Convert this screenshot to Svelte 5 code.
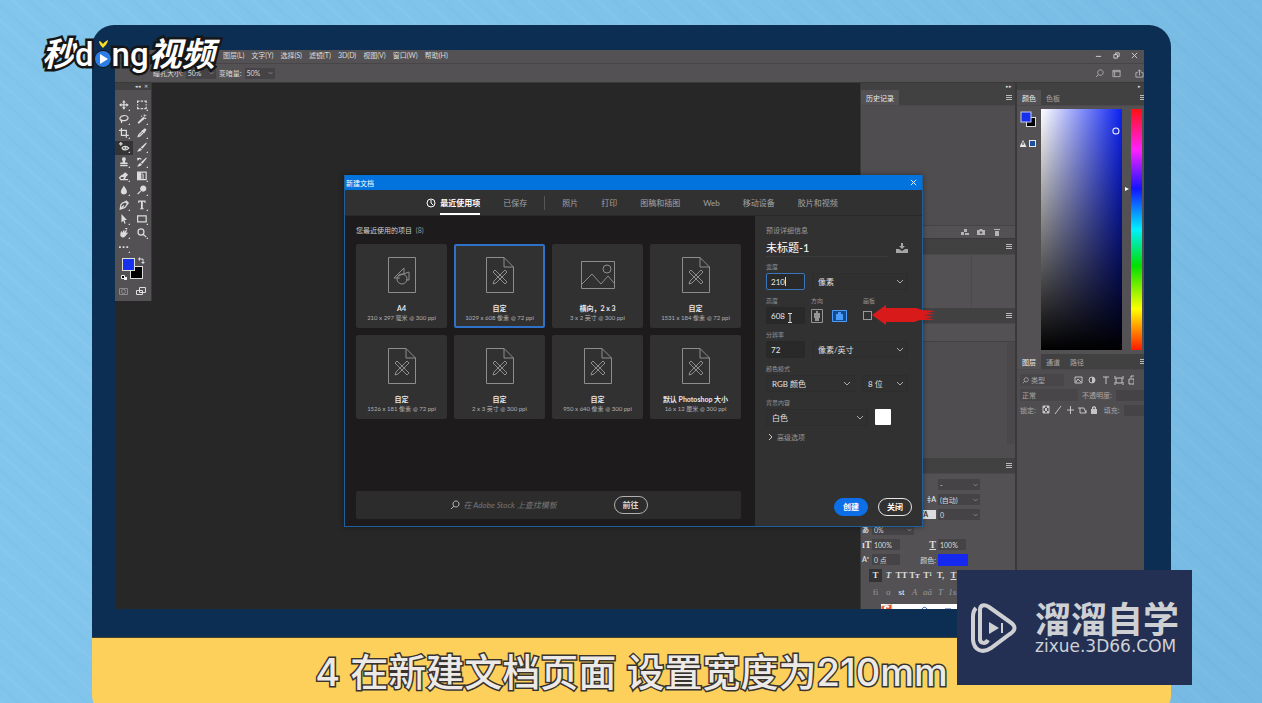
<script lang="ts">
  type Tool = { name: string; line?: string; fill?: string };

  const menus = ['图层(L)', '文字(Y)', '选择(S)', '滤镜(T)', '3D(D)', '视图(V)', '窗口(W)', '帮助(H)'];

  const tools: Tool[] = [
    { name: '移动', line: 'M8 2V14M2 8H14', fill: 'M8 0L11 4H5ZM8 16L5 12H11ZM0 8L4 5V11ZM16 8L12 11V5Z' },
    { name: '选框', line: 'M1 5V2H4M6 2H10M12 2H15V5M15 7V9M15 11V14H12M10 14H6M4 14H1V11M1 9V7' },
    { name: '套索', line: 'M4 11C0 9 1 3 8 2.500C15 2 17 8 12 10C9 11.500 6 11 4 10C3 12 5 12 4 15' },
    { name: '魔棒', line: 'M2 15L10 7M12 1V4M15 7H12M7 3L8 4M15 2L14 3', fill: 'M9 6L12 4L12 8L3 16L1 14Z' },
    { name: '裁剪', line: 'M4 0V12H16M0 4H12V16' },
    { name: '吸管', line: 'M2 14L3 11L9 5L11 7L5 13Z', fill: 'M8 4L10 3L12 1C14 0 16 2 15 4L13 6L12 9Z' },
    { name: '红眼', line: 'M3 0V6M0 3H6M5 10C7 6 13 6 16 10C13 14 7 14 5 10Z', fill: 'M9 8.500H12V11.500H9Z' },
    { name: '画笔', fill: 'M15 1L16 2L9 11L6 9ZM5 10L8 12C7 15 3 16 0 15C3 14 2 11 5 10Z' },
    { name: '图章', fill: 'M6 9C7 6 4 5 5 2C6 0 10 0 11 2C12 5 9 6 10 9H14V12H2V9ZM2 13H14V15H2Z' },
    { name: '历史画笔', line: 'M1 4C3 1 6 2 7 4', fill: 'M15 1L16 2L9 11L6 9ZM5 10L8 12C7 15 3 16 0 15C3 14 2 11 5 10ZM0 1L1 6L4 4Z' },
    { name: '橡皮擦', line: 'M1 11L5 7L10 11L7 14H3ZM7 14H15', fill: 'M5 7L10 2L15 6L10 11Z' },
    { name: '渐变', line: 'M1 2H15V14H1Z', fill: 'M1 2H7V14H1ZM8 3H9V13H8ZM10 5H11V13H10Z' },
    { name: '模糊', fill: 'M8 1C10 5 13 8 13 11C13 17 3 17 3 11C3 8 6 5 8 1Z' },
    { name: '减淡', line: 'M6 10L1 15', fill: 'M10 1C17 1 17 11 10 11C3 11 4 1 10 1Z' },
    { name: '钢笔', line: 'M2 15L3 8C6 3 9 5 12 2L15 5C11 8 13 11 8 13ZM2 15L8 9M10 2L15 7' },
    { name: '文字', fill: 'M2 1H14V5H12.500L12 3H9.500V13.500L11 14V15H5V14L6.500 13.500V3H4L3.500 5H2Z' },
    { name: '路径选择', fill: 'M4 0L13 10H9L11 15L9 16L7 11L4 14Z' },
    { name: '矩形', line: 'M1 3H15V13H1Z' },
    { name: '旋转视图', fill: 'M3 6L5 5L5 8L8 3L9 4L8 7L12 3L13 4L11 8L14 7L14 9L10 14C7 17 2 15 2 11ZM9 0L14 0L13 3Z' },
    { name: '缩放', line: 'M10.500 10.500L15 15M6.500 1.500C13 1.500 13 11.500 6.500 11.500C0 11.500 0 1.500 6.500 1.500Z' },
    { name: '编辑工具栏', fill: 'M0 7H3V10H0ZM6 7H9V10H6ZM12 7H15V10H12Z' },
  ];

  const categories = ['照片', '打印', '图稿和插图', 'Web', '移动设备', '胶片和视频'];

  const presets = [
    { icon: 'print', name: 'A4', size: '210 x 297 毫米 @ 300 ppi' },
    { icon: 'custom', name: '自定', size: '1029 x 608 像素 @ 72 ppi' },
    { icon: 'photo', name: '横向，2 x 3', size: '3 x 2 英寸 @ 300 ppi' },
    { icon: 'custom', name: '自定', size: '1531 x 184 像素 @ 72 ppi' },
    { icon: 'custom', name: '自定', size: '1526 x 181 像素 @ 72 ppi' },
    { icon: 'custom', name: '自定', size: '2 x 3 英寸 @ 300 ppi' },
    { icon: 'custom', name: '自定', size: '950 x 640 像素 @ 300 ppi' },
    { icon: 'custom', name: '默认 Photoshop 大小', size: '16 x 12 厘米 @ 300 ppi' },
  ];

  const typeStyles = ['T', 'T', 'TT', 'Tт', 'T¹', 'T,', 'T', 'T'];
  const openType = ['fi', 'σ', 'st', 'A', 'aā', 'T', '1st', '½'];

  let selected = $state(1);
  let width = $state('210');
  let height = $state('608');
  let resolution = $state('72');
  let landscape = $state(true);
  let artboard = $state(false);
</script>

{#snippet chevron()}
  <svg class="chevron" viewBox="0 0 8 5" aria-hidden="true"><path d="M1 1L4 4L7 1" /></svg>
{/snippet}

{#snippet panelMenu()}
  <svg class="panel-menu" viewBox="0 0 6 5" aria-hidden="true"><path d="M0 .5H6M0 2.500H6M0 4.500H6" /></svg>
{/snippet}

{#snippet picker(label: string, value: string)}
  <span class="picker">
    <select aria-label={label}><option>{value}</option></select>
    {@render chevron()}
  </span>
{/snippet}

<main class="scene">
  <section class="frame">
    <div class="app">
      <nav class="menubar">
        {#each menus as menu (menu)}
          <button>{menu}</button>
        {/each}
        <span class="window-buttons">
          <svg viewBox="0 0 8 8" aria-hidden="true"><path d="M1 5H7" /></svg>
          <svg viewBox="0 0 8 8" aria-hidden="true"><path d="M3 3V1H7V5H5M1 3H5V7H1Z" /></svg>
          <svg viewBox="0 0 8 8" aria-hidden="true"><path d="M1 1L7 7M7 1L1 7" /></svg>
        </span>
      </nav>

      <div class="options">
        <label for="pupil">瞳孔大小:</label>
        <span class="mini mini--option"><input id="pupil" value="50%" />{@render chevron()}</span>
        <label for="darken">变暗量:</label>
        <span class="mini mini--option"><input id="darken" value="50%" />{@render chevron()}</span>
        <span class="option-icons">
          <svg viewBox="0 0 10 10" aria-hidden="true"><path d="M4 6L1 9M6 1C10 1 10 7 6 7C2 7 2 1 6 1Z" /></svg>
          <svg viewBox="0 0 10 10" aria-hidden="true"><path d="M1 1.500H9V8.500H1ZM1 3H9M3 3V8" /></svg>
          <svg viewBox="0 0 10 10" aria-hidden="true"><path d="M3 4H1V9H9V4H7M5 7V1M3 3L5 1L7 3" /></svg>
        </span>
      </div>

      <div class="workspace">
        <aside class="tools">
          <div class="tools__head">◂◂ &nbsp;✕</div>
          <div class="tools__grid">
            {#each tools as tool (tool.name)}
              <button class="tool" class:tool--active={tool.name === '红眼'} aria-label={tool.name}>
                <svg viewBox="0 0 18 18" aria-hidden="true">
                  {#if tool.line}<path class="line" d={tool.line} />{/if}
                  {#if tool.fill}<path class="solid" d={tool.fill} />{/if}
                  <path class="solid" d="M18 15V18H15Z" />
                </svg>
              </button>
            {/each}
          </div>
          <svg class="tools__colors" viewBox="0 0 36 44" aria-hidden="true">
            <rect x="15.500" y="10.500" width="12" height="12" fill="#000" stroke="#ddd" />
            <rect x="7.500" y="2.500" width="12" height="12" fill="#1730ee" stroke="#ddd" />
            <path d="M25 3H28V6" fill="none" stroke="#ddd" />
            <path d="M23 3L25 1V5ZM28 8L26 6H30Z" fill="#ddd" />
            <path d="M6.500 19.500H9.500V22.500H6.500Z" fill="#000" stroke="#eee" />
            <path d="M9 21H12V24H9Z" fill="#eee" />
            <path d="M4.500 32.500H12.500V38.500H4.500Z" fill="none" stroke="#8c8a8c" />
            <circle cx="8.500" cy="35.500" r="2" fill="none" stroke="#8c8a8c" />
            <path d="M24.500 31.500H30.500V36.500H24.500ZM21.500 34.500H27.500V38.500H21.500Z" fill="#535153" stroke="#ddd" />
          </svg>
        </aside>

        <div class="canvas"></div>

        <div class="column column--wide">
          <div class="strip">▸▸</div>
          <div class="tabs"><button class="tab tab--active">历史记录</button>{@render panelMenu()}</div>
          <div class="history"></div>
          <div class="history-foot">
            <svg viewBox="0 0 8 8" aria-hidden="true"><path d="M0 4H3V7H0ZM3 1H6V4H3ZM4 5H8V7H4Z" /></svg>
            <svg viewBox="0 0 8 8" aria-hidden="true"><path fill-rule="evenodd" d="M0 2H2L3 1H5L6 2H8V7H0ZM4 3L2.500 4.500L4 6L5.500 4.500Z" /></svg>
            <svg viewBox="0 0 8 8" aria-hidden="true"><path d="M1 1H7V2H1ZM2 3H6V8H2Z" /></svg>
          </div>
          <div class="tabs">{@render panelMenu()}</div>
          <div class="adjust"></div>
          <div class="tabs">{@render panelMenu()}</div>
          <div class="library-head"></div>
          <div class="library"><span></span></div>
          <div class="tabs">{@render panelMenu()}</div>
          <div class="character">
            <div class="pair">
              <span></span>
              <span></span>
              <span></span>
              <span class="mini mini--wide"><input aria-label="字体样式" value="-" />{@render chevron()}</span>
            </div>
            <div class="pair">
              <span></span>
              <span></span>
              <b>‡A</b>
              <span class="mini mini--wide"><input aria-label="行距" value="(自动)" />{@render chevron()}</span>
            </div>
            <div class="pair">
              <span></span>
              <span></span>
              <b class="boxed">VA</b>
              <span class="mini mini--wide"><input aria-label="字距" value="0" />{@render chevron()}</span>
            </div>
            <div class="pair">
              <b>あ</b>
              <span class="mini mini--wide"><input aria-label="比例间距" value="0%" />{@render chevron()}</span>
            </div>
            <div class="pair">
              <b class="big">ıT</b>
              <span class="mini"><input aria-label="垂直缩放" value="100%" /></span>
              <b class="big under">T</b>
              <span class="mini"><input aria-label="水平缩放" value="100%" /></span>
            </div>
            <div class="pair">
              <b>Aª</b>
              <span class="mini"><input aria-label="基线偏移" value="0 点" /></span>
              <span class="right">颜色:</span>
              <span class="ink"></span>
            </div>
            <div class="glyphs">
              {#each typeStyles as glyph, i (i)}
                <button class:pressed={i === 0} class:slanted={i === 1} class:under={i === 6}>{glyph}</button>
              {/each}
            </div>
            <div class="glyphs glyphs--dim">
              {#each openType as glyph, i (i)}
                <button class:lit={i === 2} class:slanted={i > 2}>{glyph}</button>
              {/each}
            </div>
            <div class="ime">
              <svg viewBox="0 0 80 10" aria-hidden="true">
                <path d="M0 2L11 0V10H0Z" fill="#e85a2c" />
                <path d="M8 3C4 1 2 5 6 6C9 7 8 9 4 9" stroke="#fff" stroke-width="2" />
                <path d="M18 5V10M40 10C40 1 47 1 47 10M54 6V10M64 5H70" stroke="#2b4fa8" />
              </svg>
            </div>
          </div>
        </div>

        <div class="column column--narrow">
          <div class="strip">▸</div>
          <div class="tabs">
            <button class="tab tab--active">颜色</button>
            <button class="tab">色板</button>
            {@render panelMenu()}
          </div>
          <div class="color">
            <svg class="color__chips" viewBox="0 0 18 40" aria-hidden="true">
              <rect x="6.500" y="8.500" width="9" height="9" fill="#000" stroke="#ddd" />
              <rect x="1" y="3" width="10" height="10" fill="#1730ee" stroke="#c4cbee" />
              <path d="M3 31L6.500 38H-.5Z" fill="#e8e8e8" />
              <path d="M3 33V36" stroke="#333" />
              <rect x="9.500" y="31.500" width="6" height="6" fill="#1d4fa0" stroke="#e8e8e8" />
            </svg>
            <svg class="color__field" viewBox="0 0 80 241" preserveAspectRatio="none" aria-hidden="true">
              <defs>
                <linearGradient id="sat"><stop stop-color="#fff" /><stop offset="1" stop-color="#0b21f2" /></linearGradient>
                <linearGradient id="val" x2="0" y2="1"><stop stop-opacity="0" /><stop offset="1" /></linearGradient>
              </defs>
              <rect width="80" height="241" fill="url(#sat)" />
              <rect width="80" height="241" fill="url(#val)" />
              <circle cx="74" cy="22" r="3" fill="none" stroke="#fff" />
            </svg>
            <svg class="color__mark" viewBox="0 0 4 241" aria-hidden="true"><path d="M0 78L4 80L0 82Z" fill="#fff" /></svg>
            <span class="color__hue"></span>
          </div>
          <div class="tabs tabs--layers">
            <button class="tab tab--active">图层</button>
            <button class="tab">通道</button>
            <button class="tab">路径</button>
            {@render panelMenu()}
          </div>
          <div class="layers">
            <div class="layers__row">
              <span class="well">
                <svg class="find" viewBox="0 0 10 10" aria-hidden="true"><path d="M4 6L1 9M6 1C10 1 10 7 6 7C2 7 2 1 6 1Z" /></svg>类型
              </span>
              <svg viewBox="0 0 60 10" aria-hidden="true">
                <path d="M1 2H8V8H1ZM2 7L4 4L7 7M29 2H35M32 2V9M42 3H48V8H42ZM41 1V4M49 1V4M41 7V10M49 7V10M55 4H60V9H55ZM57 3V1H60" />
                <circle cx="18" cy="5" r="3" />
                <path class="solid" d="M18 2V8C22 8 22 2 18 2Z" />
              </svg>
            </div>
            <div class="layers__row"><span class="well well--mode">正常</span><span>不透明度:</span><i></i></div>
            <div class="layers__row">
              <span>锁定:</span>
              <svg viewBox="0 0 56 10" aria-hidden="true">
                <path d="M1 1H7V8H1ZM13 9L19 1M25 5H32M28.500 1V9M38 3V8H44V5M36 3H42L44 8" />
                <path class="solid" d="M1 1H3V3H1ZM5 1H7V3H5ZM3 3H5V6H3ZM1 6H3V8H1ZM5 6H7V8H5ZM49 4H55V9H49ZM50 4V2L52 1L54 2V4H53L52 2L51 4Z" />
              </svg>
              <span>填充:</span><i></i>
            </div>
          </div>
        </div>
      </div>

      <div class="dialog" role="dialog" aria-label="新建文档">
        <header class="dialog__title">
          <span>新建文档</span>
          <button aria-label="关闭窗口"><svg viewBox="0 0 8 8" aria-hidden="true"><path d="M1 1L7 7M7 1L1 7" /></svg></button>
        </header>
        <nav class="dialog__tabs">
          <button class="current">
            <svg viewBox="0 0 10 10" aria-hidden="true"><circle cx="5" cy="5" r="4" /><path d="M5 2V5L7 7" /></svg>
            <span>最近使用项</span>
          </button>
          <button>已保存</button>
          <span class="divider"></span>
          {#each categories as category (category)}
            <button>{category}</button>
          {/each}
        </nav>

        <div class="dialog__body">
          <section class="recent">
            <h2>您最近使用的项目 <span>(8)</span></h2>
            <div class="cards">
              {#each presets as preset, i (i)}
                <button class="card" class:card--selected={selected === i} onclick={() => (selected = i)}>
                  <svg viewBox="0 0 36 36" aria-hidden="true">
                    {#if preset.icon === 'print'}
                      <path d="M4.500 .5H31.500V35.500H4.500ZM10 21L20 11V17M10 21L16 21M14 19L25 15V23H22" />
                      <circle cx="18" cy="22" r="5" />
                    {:else if preset.icon === 'photo'}
                      <path d="M1.500 4.500H34.500V31.500H1.500ZM2 27L12 17L21 27L28 19L34 26" />
                      <circle cx="27" cy="12" r="4" />
                    {:else}
                      <path d="M4.500 .5H22L31.500 10V35.500H4.500ZM22 .5V10H31.500" />
                      <path d="M11 15L13 13L25 25L23 27ZM23 13L25 15L14 26L11 27L12 24Z" />
                    {/if}
                  </svg>
                  <strong>{preset.name}</strong>
                  <small>{preset.size}</small>
                </button>
              {/each}
            </div>
            <form class="stock" onsubmit={(e) => e.preventDefault()}>
              <svg viewBox="0 0 10 10" aria-hidden="true"><path d="M4 6L1 9M6 1C10 1 10 7 6 7C2 7 2 1 6 1Z" /></svg>
              <input aria-label="查找模板" placeholder="在 Adobe Stock 上查找模板" />
              <button class="pill">前往</button>
            </form>
          </section>

          <section class="details">
            <h3>预设详细信息</h3>
            <div class="name">
              <input aria-label="文档名称" value="未标题-1" />
              <svg viewBox="0 0 12 10" aria-hidden="true"><path d="M0 6H3L6 8L9 6H12V10H0ZM5 0H7V3H9L6 6L3 3H5Z" /></svg>
            </div>
            <div class="field">
              <label for="doc-width">宽度</label>
              <div class="field__row">
                <input id="doc-width" class="num num--focus" bind:value={width} />
                {@render picker('单位', '像素')}
              </div>
            </div>
            <div class="field field--triple">
              <label for="doc-height">高度</label>
              <span>方向</span>
              <label for="artboard">画板</label>
              <input id="doc-height" class="num" bind:value={height} />
              <div class="orient">
                <button class:on={!landscape} aria-label="纵向" onclick={() => (landscape = false)}>
                  <svg class="tall" viewBox="0 0 12 14" aria-hidden="true"><path d="M.5 .5H11.500V13.500H.5Z" /><path class="man" d="M5 2H7V4H9V9H8V12H4V9H3V4H5Z" /></svg>
                </button>
                <button class:on={landscape} aria-label="横向" onclick={() => (landscape = true)}>
                  <svg class="broad" viewBox="0 0 15 12" aria-hidden="true"><path d="M.5 .5H14.500V11.500H.5Z" /><path class="man" d="M6 2H9V4H11V10H4V4H6Z" /></svg>
                </button>
              </div>
              <input id="artboard" type="checkbox" bind:checked={artboard} />
            </div>
            <div class="field">
              <label for="doc-res">分辨率</label>
              <div class="field__row">
                <input id="doc-res" class="num" bind:value={resolution} />
                {@render picker('分辨率单位', '像素/英寸')}
              </div>
            </div>
            <div class="field field--mode">
              <span>颜色模式</span>
              <div class="field__row">
                {@render picker('颜色模式', 'RGB 颜色')}
                {@render picker('位深度', '8 位')}
              </div>
            </div>
            <div class="field field--back">
              <span>背景内容</span>
              <div class="field__row">
                {@render picker('背景内容', '白色')}
                <button class="swatch" aria-label="背景颜色"></button>
              </div>
            </div>
            <button class="advanced">
              <svg viewBox="0 0 5 8" aria-hidden="true"><path d="M1 1L4 4L1 7" /></svg>高级选项
            </button>
            <div class="actions">
              <button class="pill pill--primary">创建</button>
              <button class="pill pill--strong">关闭</button>
            </div>
          </section>
        </div>

        <svg class="caret" viewBox="0 0 1 9" aria-hidden="true"><path d="M.5 0V9" /></svg>
        <svg class="ibeam" viewBox="0 0 6 10" aria-hidden="true"><path d="M1 .5H5M3 .5V9.500M1 9.500H5" /></svg>
        <svg class="arrow" viewBox="0 0 64 20" aria-hidden="true">
          <path d="M0 10L14 0L14 3L44 3L50 5L63 6L55 8L64 9L52 10L62 12L54 13L63 15L48 15L42 17H14V20Z" />
        </svg>
      </div>
    </div>
  </section>

  <p class="caption">4 在新建文档页面 设置宽度为210mm</p>

  <div class="brand">
    <em>秒</em>
    <span>d</span>
    <svg viewBox="0 0 18 34" aria-hidden="true">
      <circle cx="9" cy="21" r="9" fill="#161616" />
      <path d="M5 3C7 3 8 5 9 6C10 4 12 3 14 2C14 5 11 8 9 10C7 8 5 6 5 3Z" fill="#f9dc2b" stroke="#111" stroke-width=".5" />
      <circle cx="9" cy="21" r="8" fill="#2b7de9" />
      <path d="M6 16L14 21L6 26Z" fill="#fff" />
    </svg>
    <span>ng</span>
    <em>视频</em>
  </div>

  <div class="watermark">
    <svg viewBox="0 0 46 50" aria-hidden="true">
      <path d="M9 38V7C9 2 13 1 18 4L39 19C45 23 45 27 39 31L20 45C11 51 3 47 2 37V14C2 9 3 7 5 5" />
      <path d="M9 36C9 41 15 41 17 37" />
      <path class="solid" d="M18 19L28 25L18 31Z" />
      <path class="thin" d="M31 20V30" />
    </svg>
    <div>
      <strong>溜溜自学</strong>
      <span>zixue.3D66.COM</span>
    </div>
  </div>
</main>

<style>
  :global(body) {
    margin: 0;
  }
  * {
    box-sizing: border-box;
  }
  .scene {
    position: relative;
    height: 100vh;
    overflow: hidden;
    padding: 25px 91px 0 92px;
    background:
      repeating-linear-gradient(42deg, #ffffff08 0 3px, transparent 3px 11px, #2a80b008 11px 14px, transparent 14px 23px),
      linear-gradient(100deg, #82c6ed, #7fc2e9 50%, #76b9e2);
    font-family: Lato, 'Noto Sans CJK SC', sans-serif;
    font-size: 7px;
    line-height: 8px;
    color: #dcdcdc;
  }
  button,
  input,
  select {
    margin: 0;
    padding: 0;
    border: 0;
    background: none;
    color: inherit;
    font: inherit;
    min-width: 0;
    outline: 0;
  }
  button {
    white-space: nowrap;
  }
  svg {
    display: block;
    fill: none;
    stroke: currentColor;
    flex: none;
  }
  .frame {
    padding: 25px 27px 28px 23px;
    border-radius: 22px 22px 0 0;
    background: #0b2e52;
  }
  .app {
    position: relative;
    display: flex;
    flex-direction: column;
    height: 559px;
    background: #272727;
  }

  .menubar {
    display: flex;
    align-items: center;
    gap: 7px;
    height: 13px;
    padding: 0 6px 3px 108px;
    background: #535153;
  }
  .window-buttons {
    display: flex;
    gap: 11px;
    margin-left: auto;
  }
  .window-buttons svg {
    width: 7px;
    height: 7px;
  }
  .options {
    display: flex;
    align-items: center;
    gap: 3px;
    height: 20px;
    padding-left: 38px;
    overflow: hidden;
    border-top: 1px solid #474547;
    border-bottom: 1px solid #3a393a;
    background: #535153;
  }
  .option-icons {
    display: flex;
    gap: 8px;
    margin: 0 0 0 auto;
    color: #b5b3b5;
  }
  .option-icons svg {
    width: 9px;
    height: 9px;
  }
  .option-icons svg:last-child {
    margin-left: 6px;
  }
  .mini {
    display: flex;
    align-items: center;
    width: 28px;
    height: 11px;
    padding: 0 2px;
    background: #454345;
  }
  .mini input {
    flex: 1;
    width: 10px;
  }
  .mini--option {
    width: 30px;
  }
  .mini--wide {
    width: 42px;
  }
  .chevron {
    width: 6px;
    height: 4px;
    color: #aaa;
    pointer-events: none;
  }
  .mini .chevron {
    width: 5px;
  }

  .workspace {
    display: flex;
    flex: 1;
    min-height: 0;
  }
  .tools {
    align-self: flex-start;
    width: 37px;
    height: 218px;
    border-right: 1px solid #3a393a;
    background: #535153;
  }
  .tools__head {
    height: 7px;
    padding-right: 3px;
    background: #424142;
    font-size: 5px;
    line-height: 7px;
    text-align: right;
  }
  .tools__grid {
    display: grid;
    grid-template-columns: repeat(2, 18px);
    grid-auto-rows: 14px;
    align-content: space-between;
    height: 157px;
    margin-top: 8px;
  }
  .tool {
    display: grid;
    place-items: center;
  }
  .tool--active {
    background: #353435;
  }
  .tool svg {
    width: 11px;
    height: 11px;
  }
  .line {
    stroke-width: 2;
  }
  .solid {
    fill: currentColor;
    stroke: none;
  }
  .tools__colors {
    width: 36px;
    height: 44px;
    margin-top: 1px;
    stroke: none;
  }
  .canvas {
    flex: 1;
  }

  .column {
    display: flex;
    flex-direction: column;
    overflow: hidden;
    background: #535153;
  }
  .column > * {
    flex: none;
  }
  .column--wide {
    width: 156px;
    border-left: 1px solid #3a393a;
    border-right: 1px solid #3a393a;
  }
  .column--narrow {
    width: 128px;
    border-left: 1px solid #3a393a;
  }
  .strip {
    height: 7px;
    padding-right: 3px;
    background: #424142;
    font-size: 5px;
    line-height: 7px;
    text-align: right;
  }
  .tabs {
    display: flex;
    align-items: stretch;
    height: 16px;
    border-bottom: 1px solid #4b494b;
    background: #424142;
    color: #a9a7a9;
  }
  .tab {
    padding: 0 5px;
  }
  .tab--active {
    background: #535153;
    color: #eee;
  }
  .panel-menu {
    align-self: center;
    width: 6px;
    height: 5px;
    margin: 0 3px 0 auto;
    color: #bbb;
  }
  .column--narrow .panel-menu {
    margin-right: -2px;
  }
  .history {
    height: 119px;
    background: #4f4d4f;
  }
  .history-foot {
    display: flex;
    align-items: center;
    justify-content: flex-end;
    gap: 8px;
    height: 14px;
    padding-right: 14px;
    border-top: 1px solid #454345;
    border-bottom: 1px solid #3a393a;
    color: #b5b3b5;
  }
  .history-foot svg {
    width: 8px;
    height: 8px;
    fill: currentColor;
    stroke: none;
  }
  .adjust {
    height: 53px;
    margin-right: 43px;
    border-right: 1px solid #4b494b;
  }
  .library-head {
    height: 18px;
    border-bottom: 1px solid #434143;
  }
  .library {
    display: flex;
    justify-content: flex-end;
    height: 116px;
    padding-bottom: 14px;
    background: #4f4d4f;
  }
  .library span {
    width: 8px;
    background: #4a484a;
  }
  .character {
    padding-top: 3px;
  }
  .pair {
    display: grid;
    grid-template-columns: 10px 52px 20px 42px;
    align-items: center;
    height: 15px;
    padding-left: 1px;
    white-space: nowrap;
  }
  .pair > :nth-child(4) {
    justify-self: start;
    margin-left: -6px;
  }
  .pair b {
    line-height: 9px;
  }
  .pair b:nth-child(3),
  .right {
    justify-self: end;
    padding-right: 8px;
  }
  .pair .big {
    font-family: 'Liberation Serif', serif;
    font-size: 10px;
  }
  .pair .boxed {
    margin-right: 8px;
    padding-right: 0;
    background: #ddd;
    color: #333;
  }
  .under {
    text-decoration: underline;
  }
  .ink {
    width: 30px;
    height: 12px;
    background: #1528f0;
  }
  .glyphs {
    display: grid;
    grid-template-columns: repeat(8, 13px);
    align-items: center;
    height: 17px;
    padding-left: 8px;
    font: bold 9px/13px 'Liberation Serif', serif;
  }
  .glyphs--dim {
    color: #999;
    font-weight: normal;
  }
  .pressed {
    background: #353435;
  }
  .slanted {
    font-style: italic;
  }
  .lit {
    color: #fff;
  }
  .ime {
    height: 10px;
    margin: 3px 0 0 20px;
    background: #fff;
  }
  .ime svg {
    width: 80px;
    height: 10px;
  }

  .color {
    display: flex;
    height: 248px;
    padding: 3px 2px 4px 3px;
  }
  .color__chips {
    width: 18px;
    height: 40px;
    margin-right: 3px;
    stroke: none;
  }
  .color__field {
    flex: 1;
    width: 80px;
    height: 241px;
    stroke: none;
  }
  .color__mark {
    width: 4px;
    height: 241px;
    margin: 0 2px 0 3px;
    stroke: none;
  }
  .color__hue {
    width: 11px;
    background: linear-gradient(#ff1010, #ff20ff 17%, #1414ff 33%, #00f0ff 50%, #00e000 65%, #ffff00 83%, #ff1a00);
  }
  .column > .layers {
    display: grid;
    gap: 3px;
    flex: 1;
    align-content: start;
    padding: 4px 0 0 3px;
    background: #4f4d4f;
    color: #a9a7a9;
  }
  .layers__row {
    display: flex;
    align-items: center;
    gap: 4px;
    height: 12px;
    white-space: nowrap;
  }
  .layers__row svg {
    width: 60px;
    height: 10px;
    color: #c5c3c5;
  }
  .layers__row .find {
    width: 7px;
    height: 7px;
  }
  .layers__row i {
    flex: 1;
    height: 11px;
    background: #454345;
  }
  .well {
    display: flex;
    align-items: center;
    gap: 2px;
    width: 44px;
    padding: 2px;
    background: #484648;
  }
  .well + svg {
    margin-left: 6px;
  }
  .well--mode {
    width: 58px;
  }

  .dialog {
    position: absolute;
    top: 125px;
    left: 229px;
    width: 579px;
    height: 352px;
    display: flex;
    flex-direction: column;
    border: 1px solid #1e5f9c;
    border-top: 0;
    background: #323132;
    box-shadow: 0 0 5px #0006;
  }
  .dialog__title {
    display: flex;
    align-items: center;
    justify-content: space-between;
    height: 15px;
    padding: 0 5px 0 1px;
    background: #0273dc;
    color: #fff;
  }
  .dialog__title svg {
    width: 7px;
    height: 7px;
  }
  .dialog__tabs {
    display: flex;
    justify-content: center;
    gap: 23px;
    height: 26px;
    padding-right: 3px;
    border-bottom: 1px solid #2a292a;
    font-size: 8px;
    color: #a3a3a3;
  }
  .dialog__tabs .current {
    display: flex;
    align-items: center;
    gap: 4px;
    color: #fff;
    font-weight: bold;
  }
  .current svg {
    width: 10px;
    height: 10px;
  }
  .current span {
    height: 25px;
    border-bottom: 2px solid #fff;
    line-height: 26px;
  }
  .divider {
    align-self: center;
    width: 1px;
    height: 14px;
    margin: 0 -6px;
    background: #555;
  }
  .dialog__body {
    display: flex;
    flex: 1;
  }
  .recent {
    flex: 1;
    display: flex;
    flex-direction: column;
    padding: 10px 14px 7px 11px;
    background: #1d1b1c;
  }
  h2,
  h3 {
    margin: 0;
    font-size: 7px;
    font-weight: normal;
    line-height: 8px;
  }
  h2 {
    color: #d0d0d0;
  }
  h2 span {
    margin-left: 2px;
    color: #999;
  }
  h3 {
    color: #999;
  }
  .cards {
    display: grid;
    grid-template-columns: repeat(4, 1fr);
    gap: 7px;
    margin-top: 10px;
  }
  .card {
    display: flex;
    flex-direction: column;
    align-items: center;
    height: 84px;
    padding-top: 11px;
    border: 2px solid #323132;
    border-radius: 2px;
    background: #323132;
    color: #b0b0b0;
  }
  .card--selected {
    border-color: #2f70c9;
  }
  .card svg {
    width: 36px;
    height: 36px;
    margin-bottom: 11px;
    color: #8d8d8d;
  }
  .card strong {
    color: #e8e8e8;
    line-height: 9px;
  }
  .card small {
    font-size: 6px;
    line-height: 9px;
  }
  .stock {
    display: flex;
    align-items: center;
    justify-content: center;
    height: 28px;
    margin-top: auto;
    border-radius: 2px;
    background: #2d2c2d;
    color: #b5b5b5;
    font-size: 8px;
  }
  .stock svg {
    width: 10px;
    height: 10px;
    margin-right: 4px;
  }
  .stock input {
    width: 150px;
    font-style: italic;
  }
  .stock input::placeholder {
    color: #777;
    opacity: 1;
  }
  .pill {
    width: 34px;
    height: 18px;
    border: 1px solid #b0b0b0;
    border-radius: 9px;
    color: #d5d5d5;
    font-size: 8px;
    font-weight: bold;
  }
  .pill--primary {
    border-color: #0c6fe8;
    background: #0c6fe8;
    color: #fff;
  }
  .pill--strong {
    border-color: #e6e6e6;
    color: #fff;
  }

  .details {
    display: flex;
    flex-direction: column;
    width: 167px;
    padding: 10px 10px 10px 11px;
    background: #323132;
  }
  .name {
    display: flex;
    align-items: center;
    gap: 8px;
    margin: 4px 4px 6px 0;
  }
  .name input {
    flex: 1;
    height: 19px;
    border-bottom: 1px solid #3c3b3c;
    color: #fff;
    font-size: 11px;
  }
  .name svg {
    width: 12px;
    height: 10px;
    color: #a5a5a5;
    fill: currentColor;
    stroke: none;
  }
  .field {
    display: grid;
    gap: 2px;
    margin: 0 4px 7px 0;
    color: #949494;
  }
  .field > label,
  .field > span {
    height: 8px;
    font-size: 6px;
  }
  .field__row {
    display: flex;
    gap: 7px;
    height: 17px;
    color: #e0e0e0;
  }
  .num {
    width: 39px;
    height: 17px;
    padding-left: 4px;
    border: 1px solid #292829;
    border-radius: 2px;
    background: #2a292a;
    color: #e8e8e8;
    font-size: 8px;
  }
  .num.num--focus {
    border-color: #3b76bb;
  }
  .picker {
    display: grid;
    flex: 1;
    align-items: center;
    border: 1px solid #2e2d2e;
    background: #303030;
  }
  .picker select {
    grid-area: 1 / 1;
    width: 100%;
    height: 15px;
    padding-left: 5px;
    appearance: none;
    font-size: 8px;
  }
  .picker .chevron {
    grid-area: 1 / 1;
    justify-self: end;
    width: 8px;
    height: 5px;
    margin-right: 3px;
  }
  .field--triple {
    grid-template-columns: 39px 46px 1fr;
    column-gap: 6px;
    align-items: center;
  }
  .orient {
    display: flex;
    align-items: center;
    gap: 9px;
    height: 17px;
  }
  .orient .on {
    color: #4a9dff;
    background: #174a86;
  }
  .tall {
    width: 12px;
    height: 14px;
  }
  .broad {
    width: 15px;
    height: 12px;
  }
  .man {
    fill: currentColor;
    stroke: none;
  }
  .field input[type='checkbox'] {
    appearance: none;
    width: 9px;
    height: 9px;
    border: 1px solid #999;
  }
  .field--mode .picker:last-child {
    flex: 0 0 46px;
  }
  .field--back .picker {
    flex: 0 0 102px;
  }
  .swatch {
    width: 16px;
    height: 16px;
    border-radius: 1px;
    background: #fff;
  }
  .advanced {
    display: flex;
    align-items: center;
    gap: 4px;
    padding-left: 2px;
    color: #949494;
  }
  .advanced svg {
    width: 5px;
    height: 8px;
    color: #ccc;
  }
  .actions {
    display: flex;
    justify-content: flex-end;
    gap: 10px;
    margin-top: auto;
  }
  .caret {
    position: absolute;
    top: 102px;
    left: 440px;
    width: 1px;
    height: 9px;
  }
  .ibeam {
    position: absolute;
    top: 138px;
    left: 442px;
    width: 6px;
    height: 10px;
  }
  .arrow {
    position: absolute;
    top: 130px;
    left: 527px;
    width: 64px;
    height: 20px;
    fill: #d91a1a;
    stroke: none;
  }

  .caption {
    height: 80px;
    margin: 0;
    border-top: 1px solid #43412f;
    border-radius: 0 0 22px 22px;
    background: #fdd05b;
    color: #ece9e6;
    font-family: Inter, 'Noto Sans CJK SC', sans-serif;
    font-size: 38px;
    font-weight: 500;
    line-height: 68px;
    text-align: center;
    white-space: nowrap;
    -webkit-text-stroke: 3px #37332f;
    paint-order: stroke fill;
  }
  .brand {
    position: absolute;
    top: 38px;
    left: 42px;
    display: flex;
    align-items: center;
    height: 34px;
    color: #fff;
    font-family: Roboto, 'Noto Sans CJK SC', sans-serif;
    font-size: 33px;
    font-weight: bold;
    line-height: 34px;
    -webkit-text-stroke: 5px #161616;
    paint-order: stroke fill;
  }
  .brand span {
    font-weight: 500;
  }
  .brand svg {
    width: 18px;
    height: 34px;
    stroke: none;
  }
  .watermark {
    position: absolute;
    top: 570px;
    right: 70px;
    display: flex;
    align-items: center;
    gap: 18px;
    width: 235px;
    height: 115px;
    padding-left: 14px;
    background: #233054;
    color: #cfd0d3;
  }
  .watermark svg {
    width: 46px;
    height: 50px;
    stroke-width: 4;
  }
  .watermark .thin {
    stroke-width: 2;
  }
  .watermark div {
    display: grid;
  }
  .watermark strong {
    font-size: 36px;
    line-height: 36px;
  }
  .watermark span {
    font-family: 'DejaVu Sans', sans-serif;
    font-size: 17px;
    line-height: 18px;
  }
</style>
